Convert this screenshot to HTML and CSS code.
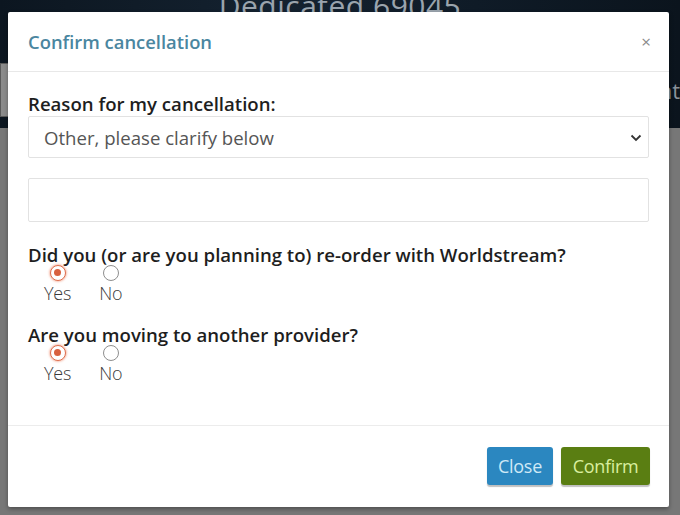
FILE: index.html
```html
<!DOCTYPE html>
<html>
<head>
<meta charset="utf-8">
<link rel="stylesheet" href="styles.css">
</head>
<body>
<div class="page">
  <div class="topbar">
    <div class="page-title">Dedicated 69045</div>
    <div class="tabs">
      <div class="tab-left"></div>
      <div class="tab-right">nt</div>
    </div>
  </div>
  <div class="content"></div>
</div>

<div class="modal">
  <div class="modal-header">
    <h4 class="modal-title">Confirm cancellation</h4>
    <span class="modal-close">×</span>
  </div>
  <div class="modal-body">
    <label class="q-label">Reason for my cancellation:</label>
    <div class="select">
      <span>Other, please clarify below</span>
      <svg class="chev" width="12" height="8" viewBox="0 0 12 8"><path d="M1.5 1.5 L6 6 L10.5 1.5" fill="none" stroke="#333" stroke-width="1.8"/></svg>
    </div>
    <div class="text-input"></div>

    <div class="question">
      <div class="q-label">Did you (or are you planning to) re-order with Worldstream?</div>
      <div class="radios">
        <div class="radio-opt"><span class="radio checked"></span><span class="opt-label">Yes</span></div>
        <div class="radio-opt"><span class="radio"></span><span class="opt-label">No</span></div>
      </div>
    </div>

    <div class="question">
      <div class="q-label">Are you moving to another provider?</div>
      <div class="radios">
        <div class="radio-opt"><span class="radio checked"></span><span class="opt-label">Yes</span></div>
        <div class="radio-opt"><span class="radio"></span><span class="opt-label">No</span></div>
      </div>
    </div>
  </div>
  <div class="modal-footer">
    <button class="btn btn-close">Close</button>
    <button class="btn btn-confirm">Confirm</button>
  </div>
</div>
</body>
</html>
```

FILE: styles.css
```css
* { box-sizing: border-box; }
html, body { margin: 0; padding: 0; }
body {
  width: 680px;
  height: 515px;
  overflow: hidden;
  font-family: "Open Sans", "Noto Sans", sans-serif;
  background: #777777;
  position: relative;
}
.page { display: flex; flex-direction: column; height: 515px; }
.topbar {
  height: 128px;
  background: linear-gradient(90deg, #0c1620 0%, #142230 40%, #0f1b27 70%, #0b141d 100%);
  position: relative;
}
.page-title {
  position: absolute;
  top: -15px;
  left: 0; right: 0;
  text-align: center;
  font-size: 30px;
  color: #9aa4ad;
  letter-spacing: 0.5px;
}
.tabs {
  position: absolute;
  top: 63px; left: 0; right: 0;
  height: 54px;
  display: flex;
  justify-content: space-between;
}
.tab-left {
  width: 14px;
  background: #8b8b8b;
  border: 1px solid #5a5a5a;
}
.tab-right {
  color: #8a929a;
  font-size: 22px;
  padding-top: 12px;
  width: 12px;
  overflow: hidden;
  direction: rtl;
}
.content { flex: 1; background: #777; }

.modal {
  position: absolute;
  left: 8px;
  top: 12px;
  width: 661px;
  height: 495px;
  background: #fff;
  border-radius: 2px;
  box-shadow: 0 2px 4px rgba(0,0,0,0.35);
  display: flex;
  flex-direction: column;
}
.modal-header {
  height: 60px;
  border-bottom: 1px solid #e8e8e8;
  display: flex;
  align-items: center;
  justify-content: space-between;
  padding: 0 18px 0 20px;
}
.modal-title {
  margin: 0;
  font-size: 18.4px;
  font-weight: 600;
  color: #4a86a0;
}
.modal-close {
  font-size: 17px;
  color: #8a8a8a;
  line-height: 1;
}
.modal-body {
  flex: 1;
  padding: 20px 20px 0 20px;
  display: flex;
  flex-direction: column;
}
.q-label {
  display: block;
  font-size: 18.6px;
  font-weight: 600;
  color: #1e1e1e;
  line-height: 24px;
}
.select {
  margin-top: 0;
  height: 42px;
  border: 1px solid #e2e2e2;
  border-radius: 2px;
  display: flex;
  align-items: center;
  justify-content: space-between;
  padding: 0 6px 0 15px;
  font-size: 18.6px;
  color: #555;
}
.chev { margin-top: 2px; }
.text-input {
  margin-top: 20px;
  height: 44px;
  border: 1px solid #e2e2e2;
  border-radius: 2px;
}
.question { margin-top: 21px; }
.question + .question { margin-top: 18px; }
.radios {
  display: flex;
  gap: 28px;
  padding-left: 16px;
  margin-top: -2px;
}
.radio-opt {
  display: flex;
  flex-direction: column;
  align-items: center;
}
.radio {
  width: 16px;
  height: 16px;
  border-radius: 50%;
  border: 1.5px solid #8e8e8e;
  background: #fff;
  position: relative;
}
.radio.checked {
  border-color: #dd6e4e;
  box-shadow: 0 0 2px 1px rgba(240,140,110,0.55);
}
.radio.checked::after {
  content: "";
  position: absolute;
  left: 3px; top: 3px;
  width: 7px; height: 7px;
  border-radius: 50%;
  background: #d8603e;
}
.opt-label {
  font-size: 18px;
  font-weight: 300;
  color: #3a3a3a;
  line-height: 24px;
  letter-spacing: -0.2px;
}
.modal-footer {
  height: 82px;
  border-top: 1px solid #ececec;
  display: flex;
  justify-content: flex-end;
  align-items: flex-start;
  gap: 8px;
  padding: 21px 19px 0 0;
}
.btn {
  height: 38px;
  border: none;
  border-radius: 3px;
  font-family: "Open Sans", "Noto Sans", sans-serif;
  font-size: 18px;
  letter-spacing: -0.3px;
  padding: 0 8px;
  box-shadow: 0 2px 1px rgba(0,0,0,0.25);
}
.btn-close {
  width: 66px;
  background: #2b87c0;
  color: #cfe9f6;
}
.btn-confirm {
  width: 89px;
  background: #5a7e12;
  color: #d9ee9f;
}
```
